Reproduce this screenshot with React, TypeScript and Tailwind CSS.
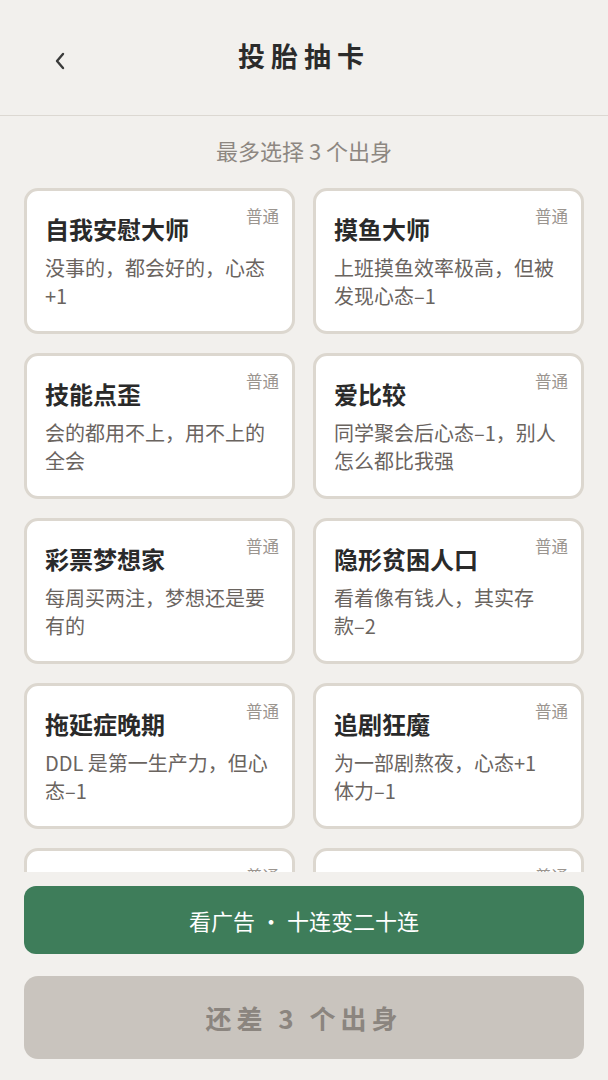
const SANS = "font-['Noto_Sans_CJK_SC','Noto_Sans',sans-serif]";
const KAI = "font-['KaiTi','STKaiti','AR_PL_UKai_CN','Noto_Sans_CJK_SC',serif]";

interface Origin {
  title: string;
  desc: string;
  rarity: string;
}

const ORIGINS: Origin[] = [
  { title: '自我安慰大师', desc: '没事的，都会好的，心态+1', rarity: '普通' },
  { title: '摸鱼大师', desc: '上班摸鱼效率极高，但被发现心态–1', rarity: '普通' },
  { title: '技能点歪', desc: '会的都用不上，用不上的全会', rarity: '普通' },
  { title: '爱比较', desc: '同学聚会后心态–1，别人怎么都比我强', rarity: '普通' },
  { title: '彩票梦想家', desc: '每周买两注，梦想还是要有的', rarity: '普通' },
  { title: '隐形贫困人口', desc: '看着像有钱人，其实存款–2', rarity: '普通' },
  { title: '拖延症晚期', desc: 'DDL 是第一生产力，但心态–1', rarity: '普通' },
  { title: '追剧狂魔', desc: '为一部剧熬夜，心态+1 体力–1', rarity: '普通' },
  { title: '社恐患者', desc: '能发消息绝不打电话', rarity: '普通' },
  { title: '熬夜冠军', desc: '凌晨三点依然精神，体力–1', rarity: '普通' },
];

function OriginCard({ origin }: { origin: Origin }) {
  return (
    <div className="relative h-[146px] rounded-[14px] border-[3px] border-[#dcd7cf] bg-white pl-[18px] pr-[22px] pt-[22px] pb-[21px]">
      <span className="absolute right-[13px] top-[13px] text-[16.5px] leading-[24px] text-[#9b958f]">
        {origin.rarity}
      </span>
      <div className="text-[24px] font-bold leading-[32px] text-[#2a2a2a]">{origin.title}</div>
      <p className="mt-[9px] text-[20px] leading-[28px] text-[#6a645f]">{origin.desc}</p>
    </div>
  );
}

export default function App() {
  return (
    <div className={`${SANS} flex h-[1080px] w-[608px] flex-col overflow-hidden bg-[#f2f0ed]`}>
      {/* Header */}
      <header className="relative flex h-[116px] shrink-0 items-center justify-center border-b border-[#dcd8d2]">
        <button className="absolute left-[50px] top-[45px] text-[#3a3a3a]">
          <svg width="20" height="30" viewBox="0 0 20 30" fill="none">
            <path d="M13 9 L7 16 L13 23" stroke="currentColor" strokeWidth="2.4" strokeLinecap="round" strokeLinejoin="round" />
          </svg>
        </button>
        <h1 className={`${KAI} -mt-[2px] text-[27px] font-bold tracking-[6px] text-[#2b2b2b]`}>投胎抽卡</h1>
      </header>

      {/* Scrollable list */}
      <main className="min-h-0 flex-1 overflow-hidden px-[24px]">
        <p className="pt-[19px] text-center text-[22px] leading-[30px] text-[#8d8781]">最多选择 3 个出身</p>
        <div className="mt-[23px] grid grid-cols-2 gap-x-[18px] gap-y-[19px]">
          {ORIGINS.map((o) => (
            <OriginCard key={o.title} origin={o} />
          ))}
        </div>
      </main>

      {/* Footer actions */}
      <footer className="flex shrink-0 flex-col gap-[22px] bg-[#f2f0ed] px-[24px] pt-[14px] pb-[21px]">
        <button className="flex h-[68px] items-center justify-center rounded-[12px] bg-[#3e7d5a] text-[22px] text-white">
          看广告 · 十连变二十连
        </button>
        <button className={`${KAI} flex h-[83px] items-center justify-center rounded-[14px] bg-[#c9c4be] text-[26px] font-bold tracking-[5px] text-[#8b857f]`}>
          还差 3 个出身
        </button>
      </footer>
    </div>
  );
}
